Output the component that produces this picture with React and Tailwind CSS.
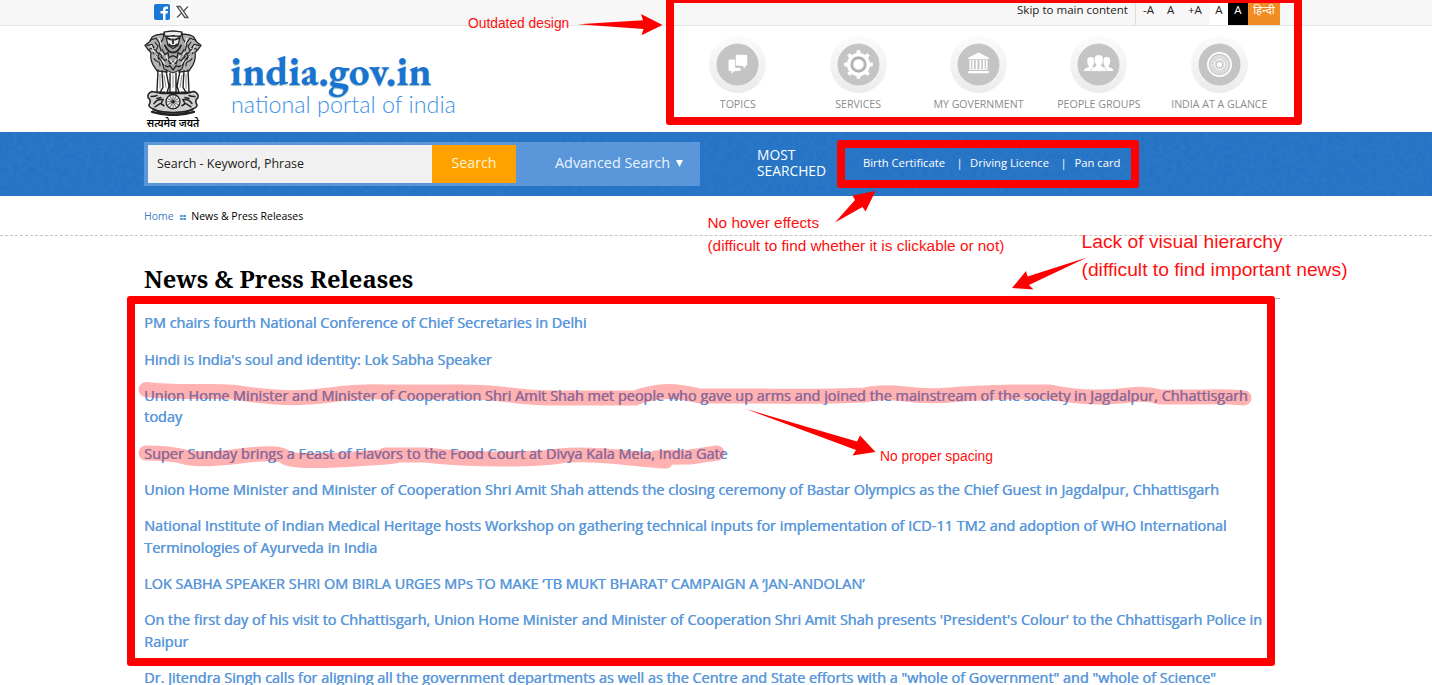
import React from 'react';

const news = [
  'PM chairs fourth National Conference of Chief Secretaries in Delhi',
  "Hindi is India's soul and identity: Lok Sabha Speaker",
  'Union Home Minister and Minister of Cooperation Shri Amit Shah met people who gave up arms and joined the mainstream of the society in Jagdalpur, Chhattisgarh today',
  'Super Sunday brings a Feast of Flavors to the Food Court at Divya Kala Mela, India Gate',
  'Union Home Minister and Minister of Cooperation Shri Amit Shah attends the closing ceremony of Bastar Olympics as the Chief Guest in Jagdalpur, Chhattisgarh',
  'National Institute of Indian Medical Heritage hosts Workshop on gathering technical inputs for implementation of ICD-11 TM2 and adoption of WHO International Terminologies of Ayurveda in India',
  'LOK SABHA SPEAKER SHRI OM BIRLA URGES MPs TO MAKE ‘TB MUKT BHARAT’ CAMPAIGN A ‘JAN-ANDOLAN’',
  "On the first day of his visit to Chhattisgarh, Union Home Minister and Minister of Cooperation Shri Amit Shah presents 'President's Colour' to the Chhattisgarh Police in Raipur",
  'Dr. Jitendra Singh calls for aligning all the government departments as well as the Centre and State efforts with a "whole of Government" and "whole of Science"',
];

const spokes = Array.from({ length: 24 }, (_, i) => i * 15);

function Topics() {
  return (
    <g fill="#fff">
      <path d="M21 23.500h5v7q0 1.500 1.500 1.500h4v1.500q0 1.500-1.500 1.500h-4.500l-3 2.700V35h-1.500q-1.500 0-1.500-1.500V25q0-1.500 1.500-1.500z" />
      <path d="M28 18.500h9q1.500 0 1.500 1.500v8.500q0 1.500-1.500 1.500h-.500v3l-3.500-3h-5q-1.500 0-1.500-1.500v-8.500q0-1.500 1.500-1.500z" stroke="#c4c4c4" strokeWidth=".6" />
    </g>
  );
}
function Services() {
  return (
    <g>
      <circle cx="28.500" cy="28.500" r="9.900" fill="none" stroke="#fff" strokeWidth="3.200" />
      {[0, 45, 90, 135, 180, 225, 270, 315].map((a) => (
        <path key={a} d="M26.300 18.500l.5-4.300h3.400l.5 4.300z" fill="#fff" transform={`rotate(${a} 28.500 28.500)`} />
      ))}
      <circle cx="28.500" cy="28.500" r="7" fill="none" stroke="#aaa" strokeWidth="1.300" />
      <circle cx="28.500" cy="28.500" r="5" fill="#fff" />
    </g>
  );
}
function Government() {
  return (
    <g fill="#fff">
      <path d="M28.500 16.500l10 5v1.700h-20v-1.700z" />
      <path d="M19.500 24h1.600v9h-1.600zM22.300 24h1.800v9h-1.800zM25.700 24h1.800v9h-1.800zM29.500 24h1.800v9h-1.800zM32.900 24h1.800v9h-1.800zM35.900 24h1.600v9h-1.600zM19.500 33.200h18v.9h-18zM18.300 35h20.400v2.200H18.300z" />
    </g>
  );
}
function People() {
  return (
    <g fill="#fff">
      <path d="M14 35q0-2.500 3-3.300 2-.6 2-1.700-1.800-1.500-1.800-5.200 0-3.800 3.600-3.800 3.500 0 3.500 3.800 0 3.700-1.700 5.200 0 1.100 2 1.700 2.800.8 2.800 3.300z" />
      <path d="M30 35q0-2.500 3-3.300 2-.6 2-1.700-1.800-1.500-1.800-5.200 0-3.800 3.400-3.800 3.600 0 3.600 3.800 0 3.700-1.800 5.200 0 1.100 2 1.700 3 .8 3 3.300z" />
      <path d="M20.500 35.300q0-3.200 3.400-4.100 2.300-.7 2.300-2.100-2-1.900-2-5.600 0-4.800 4.500-4.800t4.500 4.800q0 3.700-2 5.600 0 1.400 2.300 2.100 3.500.9 3.500 4.100z" stroke="#c4c4c4" strokeWidth=".6" />
    </g>
  );
}
function Chakra() {
  return (
    <g stroke="#fff" fill="none">
      <circle cx="28.500" cy="28.500" r="11.600" strokeWidth="1.700" />
      <circle cx="28.500" cy="28.500" r="8" strokeWidth="3.500" opacity=".3" />
      {spokes.map((a) => (
        <path key={a} d="M28.500 25v-6.500" strokeWidth=".6" opacity=".6" transform={`rotate(${a} 28.500 28.500)`} />
      ))}
      <circle cx="28.500" cy="28.500" r="5.200" strokeWidth=".9" />
      <circle cx="28.500" cy="28.500" r="2.600" fill="#fff" stroke="none" />
    </g>
  );
}

const nav = [
  ['TOPICS', Topics],
  ['SERVICES', Services],
  ['MY GOVERNMENT', Government],
  ['PEOPLE GROUPS', People],
  ['INDIA AT A GLANCE', Chakra],
];

function NavItem({ label, Icon }) {
  return (
    <a className="flex w-[120.4px] flex-col items-center">
      <svg width="57" height="57" viewBox="0 0 57 57">
        <defs>
          <linearGradient id="disc" x1="0" y1="0" x2="0" y2="1">
            <stop offset="0" stopColor="#fbfbfb" />
            <stop offset="1" stopColor="#ebebeb" />
          </linearGradient>
        </defs>
        <circle cx="28.500" cy="28.500" r="28.500" fill="url(#disc)" />
        <circle cx="28.500" cy="28.500" r="20.600" fill="#c4c4c4" stroke="#bbb" strokeWidth=".6" />
        <Icon />
      </svg>
      <span className="mt-[3px] text-[10.6px] leading-[16px] whitespace-nowrap text-[#8c8c8c]">{label}</span>
    </a>
  );
}

function Emblem() {
  return (
    <svg width="58" height="86" viewBox="0 0 58 84" preserveAspectRatio="none" fill="none" stroke="#222" strokeLinecap="round">
      {/* side lions */}
      <path d="M20 4Q12 4 8 7L6 11 1 15 4 19 7 22Q6 28 9 34L13 40 23 41V8zM38 4Q46 4 50 7L52 11 57 15 54 19 51 22Q52 28 49 34L45 40 35 41V8z" fill="#b5b5b5" strokeWidth="1.300" strokeDasharray="3 .6" />
      <path d="M3 15l5-1 2 3-5 2M6 10l6-2 3 4M55 15l-5-1-2 3 5 2M52 10l-6-2-3 4" strokeWidth="1.200" />
      {/* front lion: head, mane, chest */}
      <path d="M20 3q9-4 18 0l1 6 4 5-2 6 3 6-4 5-2 7-9 4-9-4-2-7-4-5 3-6-2-6 4-5z" fill="#a5a5a5" strokeWidth="1.100" />
      <path d="M20 2q9-2 18 0l-1 4H21zM22 7q7-3 14 0l-2 8-5 3-5-3z" fill="#ececec" strokeWidth="1.200" />
      <path d="M23 8l4 1.500M35 8l-4 1.500M29 9v4M25 14q4 3.500 8 0M21 15q3 7 8 7t8-7" strokeWidth="1.800" />
      <path d="M9 22q1 3 3 3t3 4M12 20q1 3 3 3t3 4M10 28q2 3 4 3t2 4M8 18l4 2 2-4M11 12l3 4M49 22q-1 3-3 3t-3 4M46 20q-1 3-3 3t-3 4M48 28q-2 3-4 3t-2 4M50 18l-4 2-2-4M47 12l-3 4" strokeWidth="1.100" />
      <path d="M18 19l3 5 3-2 1 5 4-2 4 2 1-5 3 2 3-5M17 26l4 4 3-2 2 5 3-2 3 2 2-5 3 2 4-4M19 33l4 3 3-1 3 4 3-4 3 1 4-3" strokeWidth="1.200" />
      <path d="M16 21l3 3M42 21l-3 3M22 25l2 4M36 25l-2 4M26 29l3 4 3-4M18 29l3 5M40 29l-3 5M7 15l3 6M10 24l3 2M51 15l-3 6M48 24l-3 2M15 8l2 6M43 8l-2 6" stroke="#f4f4f4" strokeWidth="1" />
      {/* legs */}
      <path d="M14 39l-1 21M18 40l1 16-3 5M22 40l3 15-2 6M26 42v18M32 42v18M36 40l-3 15 2 6M40 40l-1 16 3 5M44 39l1 21" strokeWidth="1.400" />
      <path d="M16 43v14M20 44l2 12M38 44l-2 12M42 43v14M29 44v12" stroke="#888" strokeWidth="1" />
      <path d="M12 61h9M23 61h12M37 61h9" strokeWidth="1.800" />
      {/* abacus */}
      <path d="M8 60q-5 2-4 6 3 2 2 5-3 4 3 6l8 4h24l8-4q6-2 3-6-1-3 2-5 1-4-4-6l-8 2H18z" fill="#d0d0d0" strokeWidth="1.500" />
      <path d="M7 65q4 0 6-1M51 65q-4 0-6-1M10 72q3-5 9-4l-2 4 3 2M13 67l4-1M11 75l5-3M48 72q-3-5-9-4l2 4-3 2M45 67l-4-1M47 75l-5-3M9 78q20 5 40 0" strokeWidth="1.500" />
      <path d="M8 80q21 6 42 0" strokeWidth="2.200" />
      <circle cx="29" cy="70" r="7" fill="#eee" strokeWidth="1.300" />
      {spokes.filter((_, i) => i % 2 === 0).map((a) => (
        <path key={a} d="M29 70v-6" strokeWidth=".6" transform={`rotate(${a} 29 70)`} />
      ))}
      <circle cx="29" cy="70" r="1.500" fill="#222" stroke="none" />
    </svg>
  );
}

function Note({ className, children }) {
  return <div className={`absolute whitespace-nowrap font-['Liberation_Sans',sans-serif] text-[#ff0f0f] ${className}`}>{children}</div>;
}

function Annotations() {
  return (
    <div className="pointer-events-none absolute inset-0 overflow-hidden">
      <svg className="absolute inset-0" width="1432" height="685" fill="#f00">
        <g stroke="#f00" strokeOpacity=".3" strokeWidth="15" fill="none" strokeLinecap="round" strokeLinejoin="round">
          <path d="M146 389.500Q170 392 200 391.500T240 393T275 397T330 395T385 392H460Q490 392 510 395T560 398H635Q645 394 660 392T700 396H760Q820 397 865 395Q880 391 905 394T950 395T1015 392H1050Q1075 397 1095 397T1130 395T1160 397H1200Q1225 396 1244 398" />
          <path d="M146 453Q170 453 185 457T240 456T285 457T355 459T385 455H425Q460 459 500 459T560 456T630 458T660 460T690 457L717 453" />
        </g>
        <path d="M578 24.200L643 20.200 641 14 662.500 25 641.500 35.200 643.500 29z" />
        <path d="M835 222.500L855 200 852.500 195.500 875.500 191 865.500 211.500 862.500 207z" />
        <path d="M1087 257.500L1029 285 1033.500 289.500 1012 288 1026 271 1027.500 276.500z" />
        <path d="M746 409L857 441.500 860 435.500 875.500 452 852.500 455.500 856 450z" />
      </svg>
      <div className="absolute top-[-5px] left-[666px] h-[130px] w-[636px] rounded-[3px] border-8 border-[#f00]" />
      <div className="absolute top-[140px] left-[837px] h-[48px] w-[302px] rounded-[3px] border-8 border-[#f00]" />
      <div className="absolute top-[296px] left-[127px] h-[370px] w-[1148px] rounded-[3px] border-8 border-[#f00]" />
      <Note className="top-[13px] left-[468px] text-[13.8px] leading-[22px]">Outdated design</Note>
      <Note className="top-[211px] left-[707.500px] text-[15.37px] leading-[23px]">No hover effects<br />(difficult to find whether it is clickable or not)</Note>
      <Note className="top-[228px] left-[1081.500px] text-[19.25px] leading-[28px]">Lack of visual hierarchy<br />(difficult to find important news)</Note>
      <Note className="top-[445px] left-[880px] text-[13.83px] leading-[22px]">No proper spacing</Note>
    </div>
  );
}

export default function App() {
  return (
    <div className="relative h-[685px] w-[1432px] overflow-hidden bg-white font-['Open_Sans','Noto_Sans',sans-serif] text-black">
      <div className="flex h-[26px] border-b border-[#e4e4e4] bg-[#f7f7f7] pr-[152px] pl-[154px]">
        <div className="flex items-start gap-[5px] pt-1">
          <svg width="16" height="16" viewBox="0 0 16 16">
            <rect width="16" height="16" rx="2" fill="#1a78d6" />
            <path d="M9 16V9.500H6.500V7H9V5.500Q9 2.500 12 2.500h2V5h-1.500q-1 0-1 1v1H14l-.4 2.500h-2.100V16z" fill="#fff" />
          </svg>
          <svg width="15" height="16" viewBox="0 0 15 16">
            <rect width="15" height="16" fill="#fff" />
            <path d="M2 2.500h3.200L13 13.500H9.800zM13 2.500L8.500 7.300M6.500 9L2 13.500" fill="none" stroke="#555" strokeWidth="1.300" />
          </svg>
        </div>
        <div className="ml-auto flex h-[25px] text-[11.56px] leading-[20px] text-[#222]">
          <span className="w-[118px]">Skip to main content</span>
          <span className="w-[8px] border-l border-[#ddd]" />
          <span className="w-[24px]">-A</span>
          <span className="w-[21px]">A</span>
          <span className="w-[22px]">+A</span>
          <span className="w-[18px] bg-white text-center">A</span>
          <span className="w-[20px] bg-black text-center text-white">A</span>
          <span className="w-[32px] bg-[#f08c22] text-center text-[11.500px] text-white">हिन्दी</span>
        </div>
      </div>

      <header className="flex h-[106px] justify-between pr-[152px] pl-[144px]">
        <div className="flex">
          <div className="flex w-[58px] flex-col items-center pt-[4px]">
            <Emblem />
            <span className="-mt-px text-[10.3px] leading-[16px] font-semibold whitespace-nowrap">सत्यमेव जयते</span>
          </div>
          <div className="ml-[28px] pt-[25px]">
            <div className="text-[41.2px] leading-[40px] font-bold text-[#1873d1] font-['EB_Garamond','Liberation_Serif',serif] [text-shadow:0_1px_1px_#9bb]">india.gov.in</div>
            <div className="-mt-px ml-px text-[23.300px] leading-[28px] font-light whitespace-nowrap text-[#3d92e6] font-['Lato',sans-serif]">national portal of india</div>
          </div>
        </div>
        <nav className="mr-[0.500px] flex pt-[10px]">
          {nav.map(([label, Icon]) => <NavItem key={label} label={label} Icon={Icon} />)}
        </nav>
      </header>

      <div className="relative h-[64px] bg-[#2673c5]">
        <svg className="absolute inset-0 opacity-30" width="1432" height="64">
          <filter id="grain"><feTurbulence type="fractalNoise" baseFrequency=".22" numOctaves="2" seed="4" /><feColorMatrix values="0 0 0 0 .05  0 0 0 0 .3  0 0 0 0 .6  1.200 0 0 0 -.4" /></filter>
          <rect width="1432" height="64" filter="url(#grain)" />
        </svg>
        <div className="relative flex pt-[10px] pl-[144px] text-white">
          <div className="flex h-[44px] w-[556px] bg-[#5a96da] py-[3px] pl-1">
            <div className="w-[284px] bg-[#f1f1f1] pl-[9px] text-[12.44px] leading-[37px] text-[#222]">Search - Keyword, Phrase</div>
            <div className="w-[84px] bg-[#ffa200] text-center text-[14.2px] leading-[36px] text-[#fff3dc]">Search</div>
            <div className="flex h-[36px] items-center pl-[39px] text-[14.4px] leading-[36px] whitespace-nowrap text-[#eaf3ff]">
              Advanced Search
              <svg className="ml-[6px]" width="7" height="7"><path d="M0 0h7L3.500 7z" fill="#fff" /></svg>
            </div>
          </div>
          <div className="ml-[57px] w-[81px] pt-[5px] text-[13.8px] leading-[16px] font-medium">MOST<br />SEARCHED</div>
          <div className="ml-[25px] flex pt-[10px] text-[11.25px] leading-[22px] whitespace-nowrap">
            <span className="w-[93.500px]">Birth Certificate</span>
            <span className="w-[13.500px]">|</span>
            <span className="w-[90.500px]">Driving Licence</span>
            <span className="w-[14px]">|</span>
            <span>Pan card</span>
          </div>
        </div>
      </div>

      <div className="flex h-[40px] items-center border-b border-dashed border-[#c4c4c4] pl-[144px] text-[10.500px] leading-[16px]">
        <span className="w-[36px] text-[#3f80c0]">Home</span>
        <svg className="mt-[3px] mr-[5.300px]" width="6" height="5" fill="#4a9ad4"><path d="M0 0h2.700v2H0zM3.300 0H6v2H3.300zM0 3h2.700v2H0zM3.300 3H6v2H3.300z" /></svg>
        <span>News &amp; Press Releases</span>
      </div>

      <main className="ml-[144px] w-[1136px]">
        <h1 className="h-[63px] border-b border-[#b5b5b5] pt-[26px] text-[23.8px] leading-[34px] font-bold whitespace-nowrap font-['Roboto_Slab','Noto_Serif','DejaVu_Serif',serif]">News &amp; Press Releases</h1>
        <ul className="flex flex-col gap-[14.500px] pt-[13.300px] text-[14.44px] leading-[21.7px] text-[#5a98db] [text-shadow:0.5px_0_0_#5a98db]">
          {news.map((n) => <li key={n}><a>{n}</a></li>)}
        </ul>
      </main>

      <Annotations />
    </div>
  );
}
